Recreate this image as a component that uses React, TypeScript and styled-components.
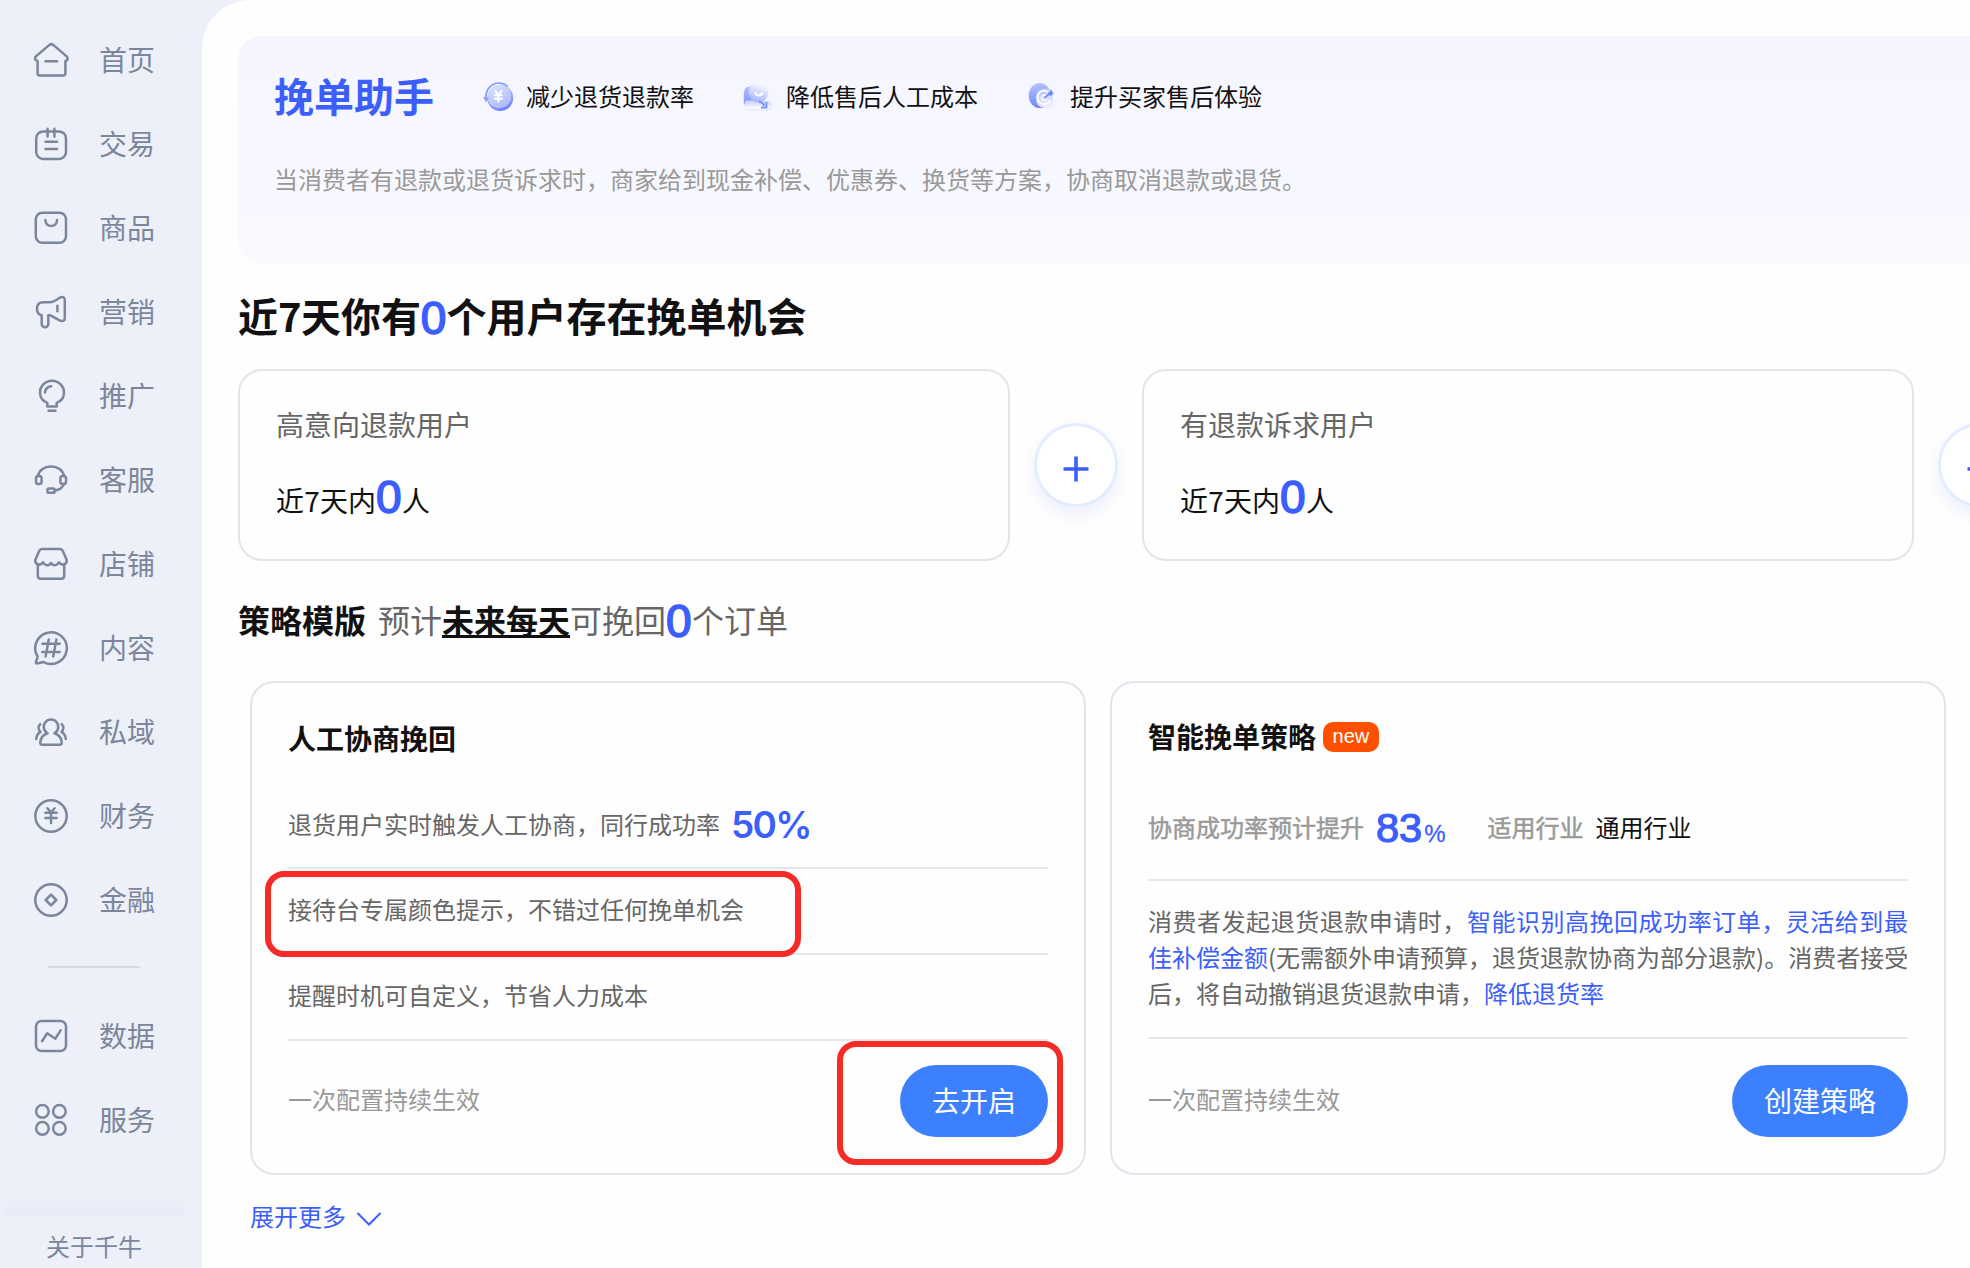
import React from "react";
import styled, { createGlobalStyle } from "styled-components";

const BLUE = "#3d5eff";
const CJK = `"Noto Sans CJK SC", "Noto Sans", sans-serif`;
const LATIN = `"Liberation Sans", "Noto Sans CJK SC", sans-serif`;

const GlobalStyle = createGlobalStyle`
  *, *::before, *::after { box-sizing: border-box; }
  body { margin: 0; background: #edf0f8; font-family: ${CJK}; }
  h1, h2, h3, p, ul { margin: 0; padding: 0; }
`;

const Page = styled.div`
  display: flex;
  width: 1970px;
  height: 1268px;
  overflow: hidden;
  position: relative;
  background: #edf0f8;
`;

/* ---------- sidebar ---------- */

const Sidebar = styled.nav`
  flex: none;
  display: flex;
  flex-direction: column;
  width: 202px;
  padding-top: 18px;
  color: #7b869d;
`;

const NavItem = styled.a`
  display: flex;
  align-items: center;
  height: 84px;
  padding-left: 33px;
  font-size: 28px;
  line-height: 40px;
  gap: 30px;
`;

const NavLabel = styled.span`
  padding-bottom: 2px;
`;

const NavIcon = styled.svg`
  flex: none;
  width: 36px;
  height: 36px;
  fill: none;
  stroke: currentColor;
  stroke-width: 2.5;
  stroke-linecap: round;
  stroke-linejoin: round;
`;

const NavDivider = styled.div`
  flex: none;
  width: 92px;
  height: 2px;
  margin: 24px 0 26px 48px;
  background: #d6d9de;
`;

const NavFade = styled.div`
  flex: none;
  width: 180px;
  height: 18px;
  margin: 36px 0 0 4px;
  background: linear-gradient(#edf0f8, #e8ecf8);
`;

const About = styled.div`
  padding: 12px 0 0 46px;
  font-size: 24px;
  line-height: 36px;
  white-space: nowrap;
`;

/* ---------- main ---------- */

const Main = styled.main`
  flex: 1;
  min-width: 0;
  height: 1268px;
  padding: 36px 0 0 36px;
  overflow: hidden;
  border-top-left-radius: 48px;
  background: #fefefe;
  white-space: nowrap;
`;

const Banner = styled.section`
  width: 1800px;
  height: 228px;
  padding: 32px 36px;
  border-radius: 24px;
  background: linear-gradient(#f4f5ff, #f9faff);
`;

const BannerTop = styled.div`
  display: flex;
  align-items: center;
  height: 56px;
`;

const BannerTitle = styled.h1`
  width: 208px;
  padding-bottom: 3px;
  color: ${BLUE};
  font-size: 40px;
  font-weight: 700;
  line-height: 56px;
`;

const Feature = styled.div`
  display: flex;
  align-items: center;
  gap: 12px;
  margin-right: 48px;
  color: #111;
  font-size: 24px;
  line-height: 36px;
`;

const FeatureIcon = styled.svg`
  width: 32px;
  height: 32px;
`;

const BannerDesc = styled.p`
  margin-top: 37px;
  color: #999;
  font-size: 24px;
  line-height: 36px;
`;

const Heading = styled.h2`
  height: 56px;
  margin-top: 23px;
  color: #111;
  font-size: 40px;
  font-weight: 700;
  line-height: 56px;
`;

const Zero = styled.span<{ $w?: number; $drop?: number }>`
  display: inline-block;
  width: ${(p) => p.$w ?? 26}px;
  color: ${BLUE};
  font-family: ${LATIN};
  font-size: 46px;
  font-weight: 400;
  line-height: 0;
  text-align: center;
  text-indent: -0.5px;
  transform: translateY(${(p) => p.$drop ?? 1}px);
  -webkit-text-stroke: 1.6px ${BLUE};
`;

const Seven = styled.span<{ $w: number }>`
  display: inline-block;
  width: ${(p) => p.$w}px;
  text-align: center;
`;

const UserRow = styled.div`
  display: flex;
  align-items: center;
  width: 2600px;
  margin-top: 26px;
`;

const UserCard = styled.section`
  width: 772px;
  height: 192px;
  padding: 33px 36px;
  border: 2px solid #e2e5ec;
  border-radius: 24px;
`;

const UserLabel = styled.div`
  color: #666;
  font-size: 28px;
  line-height: 40px;
`;

const UserValue = styled.div`
  margin-top: 36px;
  color: #111;
  font-size: 28px;
  line-height: 40px;
`;

const PlusCircle = styled.div`
  display: flex;
  align-items: center;
  justify-content: center;
  width: 84px;
  height: 84px;
  margin: 0 24px;
  padding-top: 8px;
  border: 3px solid #e3edff;
  border-radius: 50%;
  background: #fff;
  box-shadow: 0 8px 16px rgba(61, 94, 255, 0.09);
`;

const SectionTitle = styled.div`
  height: 60px;
  margin-top: 28px;
  color: #666;
  font-size: 32px;
  line-height: 60px;

  b {
    color: #111;
    font-weight: 700;
  }

  b:first-child {
    margin-right: 12px;
  }
`;

const Underlined = styled.b`
  text-decoration: underline;
  text-decoration-thickness: 3px;
  text-underline-offset: 2px;
  text-decoration-skip-ink: none;
`;

const Strategies = styled.div`
  display: flex;
  gap: 24px;
  margin: 32px 0 0 12px;
`;

const StrategyCard = styled.section`
  flex: none;
  display: flex;
  flex-direction: column;
  width: 836px;
  height: 494px;
  border: 2px solid #e2e4ec;
  border-radius: 24px;
  padding: 0 36px;
`;

const CardTitle = styled.h3<{ $top: number }>`
  display: flex;
  align-items: center;
  height: 40px;
  margin-top: ${(p) => p.$top}px;
  color: #111;
  font-size: 28px;
  font-weight: 700;
  line-height: 40px;
`;

const NewBadge = styled.span`
  height: 30px;
  margin: 2px 0 0 7px;
  padding: 0 9.5px;
  border-radius: 10px;
  background: #ff5000;
  color: #fff;
  font-family: ${LATIN};
  font-size: 20px;
  font-weight: 400;
  line-height: 29px;
`;

const Line = styled.div<{ $h: number; $pt?: number; $pb?: number }>`
  display: flex;
  align-items: center;
  height: ${(p) => p.$h}px;
  padding-top: ${(p) => p.$pt ?? 0}px;
  padding-bottom: ${(p) => p.$pb ?? 0}px;
  border-bottom: 2px solid #e5e6ec;
  color: #666;
  font-size: 24px;
`;

const Rate = styled.span`
  margin-left: 11px;
  padding-top: 4px;
  color: ${BLUE};
  font-family: Inter, ${LATIN};
  font-size: 37px;
  font-weight: 600;
  line-height: 40px;
  letter-spacing: -1.7px;
`;

const Muted = styled.span`
  color: #999;
  -webkit-text-stroke: 0.5px #999;
`;

const Boost = styled.span`
  display: flex;
  align-items: baseline;
  margin: 0 42px 0 12px;
  padding-top: 8px;
  color: ${BLUE};
  font-family: ${LATIN};
  font-size: 41.5px;
  line-height: 44px;
  -webkit-text-stroke: 1.2px ${BLUE};

  small {
    margin-left: 2px;
    font-size: 24px;
    -webkit-text-stroke: 0.3px ${BLUE};
  }
`;

const Industry = styled.span`
  margin-left: 12px;
  color: #111;
`;

const Detail = styled.div`
  height: 158px;
  padding-top: 22px;
  border-bottom: 2px solid #e5e6ec;
  color: #666;
  font-size: 24px;
  line-height: 36px;

  em {
    color: ${BLUE};
    font-style: normal;
  }
`;

const DetailLine = styled.p<{ $spread?: number }>`
  letter-spacing: ${(p) => p.$spread ?? 0}px;
`;

const CardFoot = styled.div<{ $top: number }>`
  display: flex;
  align-items: center;
  justify-content: space-between;
  height: 72px;
  margin-top: ${(p) => p.$top}px;
  color: #999;
  font-size: 24px;
`;

const FootNote = styled.span`
  padding-bottom: 5px;
`;

const Pill = styled.button`
  height: 72px;
  padding: 0 32px 2px;
  border: 0;
  border-radius: 36px;
  background: #3d80ff;
  color: #fff;
  font-family: ${CJK};
  font-size: 28px;
  line-height: 40px;
`;

const More = styled.div`
  display: flex;
  align-items: center;
  gap: 10px;
  margin: 23px 0 0 12px;
  color: ${BLUE};
  font-size: 24px;
  line-height: 36px;

  svg {
    margin-top: 5px;
  }
`;

/* Red frames that call out a region of the page */
const Callout = styled.div<{ $x: number; $y: number; $w: number; $h: number }>`
  position: absolute;
  left: ${(p) => p.$x}px;
  top: ${(p) => p.$y}px;
  width: ${(p) => p.$w}px;
  height: ${(p) => p.$h}px;
  border: 6px solid #f52b25;
  border-radius: 19px;
`;

const navTop: { label: string; icon: React.ReactNode }[] = [
  {
    label: "首页",
    icon: (
      <>
        <path d="M16.4 2.9q1.9-1.5 3.8 0L34 14.6q1.6 3.6-1.6 4.3V31q0 2.6-2.6 2.6H7.2q-2.6 0-2.6-2.6V18.9Q1 18.2 2.6 14.6Z" />
        <path d="M12.5 19.3H24" />
      </>
    ),
  },
  {
    label: "交易",
    icon: (
      <>
        <rect x="3.2" y="5.4" width="29.8" height="27.5" rx="7" />
        <path d="M14.6 2.8v7.6M21.4 2.8v7.6M12.5 15.8h11.6M12.5 23h11.6" />
      </>
    ),
  },
  {
    label: "商品",
    icon: (
      <>
        <rect x="2.8" y="2.8" width="30.2" height="30" rx="6.5" />
        <path d="M12.4 10c0 8 11.6 8 11.6 0" />
      </>
    ),
  },
  {
    label: "营销",
    icon: (
      <>
        <path d="M17 21.2l9.5 5.1c2.5 1.3 5.3.7 5.3-1.8V6c0-3-2.6-3.8-5.1-2.3C23 6.3 20 8.3 17 8.3h-6.5C6 8.3 4 11 4 14.5c0 3.5 1.8 6.2 4.7 6.7V30a3.3 3.3 0 0 0 6.6 0v-8.8Z" />
        <path d="M24.4 11.7v5.6" />
      </>
    ),
  },
  {
    label: "推广",
    icon: (
      <>
        <path d="M14.3 28.4h9.4v-3.6c4-1.6 7.3-5.3 7.3-10.1a12 12 0 0 0-24 0c0 4.8 3.3 8.5 7.3 10.1ZM15.6 32.7h6.8" />
        <path d="M12 14.5c.3-3.4 2.7-5.8 6.2-6.3" />
      </>
    ),
  },
  {
    label: "客服",
    icon: (
      <>
        <path d="M5 14C6 8 11.5 4.4 18 4.4S30 8 31 14" />
        <rect x="3" y="14" width="5.6" height="8" rx="2.3" />
        <rect x="27.4" y="14" width="5.6" height="8" rx="2.3" />
        <path d="M31 22c-1.5 3.5-4.5 6-9 6.4" />
        <rect x="14.4" y="26.6" width="7.2" height="4.2" rx="1.4" />
      </>
    ),
  },
  {
    label: "店铺",
    icon: (
      <>
        <path d="M9 2.9h18q1.9 0 2.7 1.8l3.9 9.1c.9 4.8-5.2 6.6-7.7 2.4-1.9 3.8-6.1 3.8-7.9.8-1.8 3-6 3-7.9-.8-2.5 4.2-8.6 2.4-7.7-2.4l3.9-9.1Q7.1 2.9 9 2.9Z" />
        <path d="M4.8 18.6v11.2q0 3 3 3h20.4q3 0 3-3V18.6" />
      </>
    ),
  },
  {
    label: "内容",
    icon: (
      <>
        <path d="M4.6 26.5A15.8 15.8 0 1 1 10.4 32C7.5 32.3 5.5 33.7 3 33.2 2.5 31 4.4 29.5 4.6 26.5Z" />
        <path d="M9.4 13.8h17.4M9.2 22h17.4M15.8 9.4L12.6 26.4M23.4 9.4l-3.2 17" />
      </>
    ),
  },
  {
    label: "私域",
    icon: (
      <>
        <path d="M14.6 19.3a7.3 7.3 0 1 1 6.8 0c4.5 1.5 7 5 7.3 9.2q.1 2.3-2 2.3H9.3q-2.1 0-2-2.3c.3-4.2 2.8-7.7 7.3-9.2Z" />
        <path d="M7.2 10.2c-2.2 2.3-2 5.5.3 7.7C4.8 19.6 3.4 22 3.2 25M28.8 10.2c2.2 2.3 2 5.5-.3 7.7 2.7 1.7 4.1 4.1 4.3 7.1" />
      </>
    ),
  },
  {
    label: "财务",
    icon: (
      <>
        <circle cx="18" cy="18" r="15.7" />
        <path d="M14.4 10.3l3.6 4.2 3.6-4.2M12.4 14.7h11.2M12.4 20h11.2M18 14.7v10.3" />
      </>
    ),
  },
  {
    label: "金融",
    icon: (
      <>
        <circle cx="18" cy="18" r="15.7" />
        <path d="M18 12.7l5.3 5.3-5.3 5.3-5.3-5.3Z" />
      </>
    ),
  },
];

const navBottom: { label: string; icon: React.ReactNode }[] = [
  {
    label: "数据",
    icon: (
      <>
        <rect x="3" y="3" width="30" height="30" rx="5.5" />
        <path d="M9 23.3l5.2-8 8.2 5.4 5.2-8.3" />
      </>
    ),
  },
  {
    label: "服务",
    icon: (
      <>
        <circle cx="9.4" cy="9.4" r="6.3" />
        <circle cx="26.4" cy="9.4" r="6.3" />
        <circle cx="9.4" cy="26.4" r="6.3" />
        <circle cx="26.4" cy="26.4" r="6.3" />
      </>
    ),
  },
];

const CoinIcon = () => (
  <FeatureIcon viewBox="0 0 32 32">
    <defs>
      <linearGradient id="coin" x1="0" y1="0" x2="0.4" y2="1">
        <stop offset="0" stopColor="#d3dbff" />
        <stop offset="1" stopColor="#7086fb" />
      </linearGradient>
      <linearGradient id="coinFace" x1="0" y1="0" x2="0.6" y2="1">
        <stop offset="0" stopColor="#dfe4ff" />
        <stop offset="1" stopColor="#adbafd" />
      </linearGradient>
    </defs>
    <circle cx="18.2" cy="18" r="13" fill="url(#coin)" />
    <circle cx="17.4" cy="16.5" r="11.8" fill="url(#coinFace)" />
    <path d="M4 18.5C3.2 9 10.3 2.2 18.5 3.1q4.5.6 7.2 3.5" fill="none" stroke="#8499fb" strokeWidth="1.6" />
    <path d="M1 16.5l3 6 3-4.5Z" fill="#8ea0fb" />
    <path d="M12.8 10.5l3.6 4.2 3.6-4.2M12 15.3h8.8M12 18.8h8.8M16.4 15v7.5" fill="none" stroke="#fff" strokeWidth="2" />
  </FeatureIcon>
);

const AgentIcon = () => (
  <FeatureIcon viewBox="0 0 32 32">
    <defs>
      <linearGradient id="agentBack" x1="0" y1="0" x2="0.3" y2="1">
        <stop offset="0" stopColor="#b4c1ff" />
        <stop offset="1" stopColor="#7c90fb" />
      </linearGradient>
      <linearGradient id="agentHead" x1="0.6" y1="0" x2="0.3" y2="1">
        <stop offset="0.1" stopColor="#f6f7ff" />
        <stop offset="1" stopColor="#9fb0fd" />
      </linearGradient>
      <linearGradient id="agentBase" x1="0" y1="0" x2="0" y2="1">
        <stop offset="0" stopColor="#c3cefe" />
        <stop offset="0.7" stopColor="#f6f7ff" />
      </linearGradient>
    </defs>
    <path d="M1.8 13.5q0-7 7-7h8v19h-12q-3 0-3-3Z" fill="url(#agentBack)" />
    <path d="M4 21h18.500c3.500 0 7 1 7 4.500 0 3-2 4.500-5 4.500H6.800C3.300 30 1.800 28.500 1.800 26Z" fill="url(#agentBase)" stroke="#d9dfff" strokeWidth="0.7" />
    <circle cx="16.400" cy="12.500" r="10" fill="url(#agentHead)" />
    <path d="M13.200 12.500c1 4 6.300 4 7.200 0" fill="none" stroke="#fff" strokeWidth="2.2" />
    <path d="M17 21.800q4 .6 5.500 4M24.500 22v5.500h-5.500" fill="none" stroke="#7c92fb" strokeWidth="1.9" />
  </FeatureIcon>
);

const TargetIcon = () => (
  <FeatureIcon viewBox="0 0 32 32">
    <defs>
      <linearGradient id="targetBack" x1="0.2" y1="0" x2="0.3" y2="1">
        <stop offset="0" stopColor="#b6c3ff" />
        <stop offset="1" stopColor="#6f86fa" />
      </linearGradient>
      <linearGradient id="targetFace" x1="0" y1="0" x2="0.5" y2="1">
        <stop offset="0" stopColor="#a9b8ff" />
        <stop offset="1" stopColor="#e9edff" />
      </linearGradient>
    </defs>
    <g transform="translate(1.2 0.8)">
      <ellipse cx="12.5" cy="14.8" rx="11" ry="12.5" fill="url(#targetBack)" />
      <path d="M8.5 16.5q0-9 9.5-9t8 9v7.5q0 3-3 3h-6q-8.500 0-8.500-10.500Z" fill="url(#targetFace)" />
      <path d="M21 11.5a6.4 6.8 0 1 0 1.6 8" fill="none" stroke="#fff" strokeWidth="1.7" />
      <path d="M18.8 14.8a2.8 2.8 0 1 0 .8 3.2" fill="none" stroke="#fff" strokeWidth="1.5" />
      <path d="M17.5 17l5.5-5" fill="none" stroke="#7289fa" strokeWidth="1.8" />
      <path d="M20.8 12.5l3.7-3.5.5 2.5 1.8.8-3.5 3.2Z" fill="#7289fa" />
    </g>
  </FeatureIcon>
);

const Nav = ({ label, icon }: { label: string; icon: React.ReactNode }) => (
  <NavItem>
    <NavIcon viewBox="0 0 36 36">{icon}</NavIcon>
    <NavLabel>{label}</NavLabel>
  </NavItem>
);

const Plus = () => (
  <PlusCircle>
    <svg width="26" height="26" viewBox="0 0 26 26">
      <path d="M13 .5v25M.5 13h25" stroke={BLUE} strokeWidth="3.6" />
    </svg>
  </PlusCircle>
);

const Users = ({ label }: { label: string }) => (
  <UserCard>
    <UserLabel>{label}</UserLabel>
    <UserValue>
      近<Seven $w={16}>7</Seven>天内<Zero>0</Zero>人
    </UserValue>
  </UserCard>
);

export default function App() {
  return (
    <Page>
      <GlobalStyle />
      <Sidebar>
        {navTop.map((n) => (
          <Nav key={n.label} {...n} />
        ))}
        <NavDivider />
        {navBottom.map((n) => (
          <Nav key={n.label} {...n} />
        ))}
        <NavFade />
        <About>关于千牛</About>
      </Sidebar>

      <Main>
        <Banner>
          <BannerTop>
            <BannerTitle>挽单助手</BannerTitle>
            <Feature>
              <CoinIcon />
              减少退货退款率
            </Feature>
            <Feature>
              <AgentIcon />
              降低售后人工成本
            </Feature>
            <Feature>
              <TargetIcon />
              提升买家售后体验
            </Feature>
          </BannerTop>
          <BannerDesc>
            当消费者有退款或退货诉求时，商家给到现金补偿、优惠券、换货等方案，协商取消退款或退货。
          </BannerDesc>
        </Banner>

        <Heading>
          近<Seven $w={23}>7</Seven>天你有<Zero $w={25.5} $drop={2}>0</Zero>个用户存在挽单机会
        </Heading>

        <UserRow>
          <Users label="高意向退款用户" />
          <Plus />
          <Users label="有退款诉求用户" />
          <Plus />
        </UserRow>

        <SectionTitle>
          <b>策略模版</b>预计<Underlined>未来每天</Underlined>可挽回<Zero $drop={4}>0</Zero>个订单
        </SectionTitle>

        <Strategies>
          <StrategyCard>
            <CardTitle $top={35}>人工协商挽回</CardTitle>
            <Line $h={111} $pt={21}>
              退货用户实时触发人工协商，同行成功率<Rate>50%</Rate>
            </Line>
            <Line $h={86} $pb={5}>接待台专属颜色提示，不错过任何挽单机会</Line>
            <Line $h={86} $pb={5}>提醒时机可自定义，节省人力成本</Line>
            <CardFoot $top={24}>
              <FootNote>一次配置持续生效</FootNote>
              <Pill>去开启</Pill>
            </CardFoot>
          </StrategyCard>

          <StrategyCard>
            <CardTitle $top={33}>
              智能挽单策略<NewBadge>new</NewBadge>
            </CardTitle>
            <Line $h={125} $pt={18}>
              <Muted>协商成功率预计提升</Muted>
              <Boost>
                83<small>%</small>
              </Boost>
              <Muted>适用行业</Muted>
              <Industry>通用行业</Industry>
            </Line>
            <Detail>
              <DetailLine $spread={0.53}>
                消费者发起退货退款申请时，<em>智能识别高挽回成功率订单，灵活给到最</em>
              </DetailLine>
              <DetailLine>
                <em>佳补偿金额</em>(无需额外申请预算，退货退款协商为部分退款)。消费者接受
              </DetailLine>
              <DetailLine>
                后，将自动撤销退货退款申请，<em>降低退货率</em>
              </DetailLine>
            </Detail>
            <CardFoot $top={26}>
              <FootNote>一次配置持续生效</FootNote>
              <Pill>创建策略</Pill>
            </CardFoot>
          </StrategyCard>
        </Strategies>

        <More>
          展开更多
          <svg width="26" height="14" viewBox="0 0 26 14">
            <path d="M1.5 1L13 12.5 24.5 1" fill="none" stroke={BLUE} strokeWidth="2" />
          </svg>
        </More>
      </Main>

      <Callout $x={265} $y={871} $w={536} $h={86} />
      <Callout $x={837} $y={1041} $w={226} $h={124} />
    </Page>
  );
}
